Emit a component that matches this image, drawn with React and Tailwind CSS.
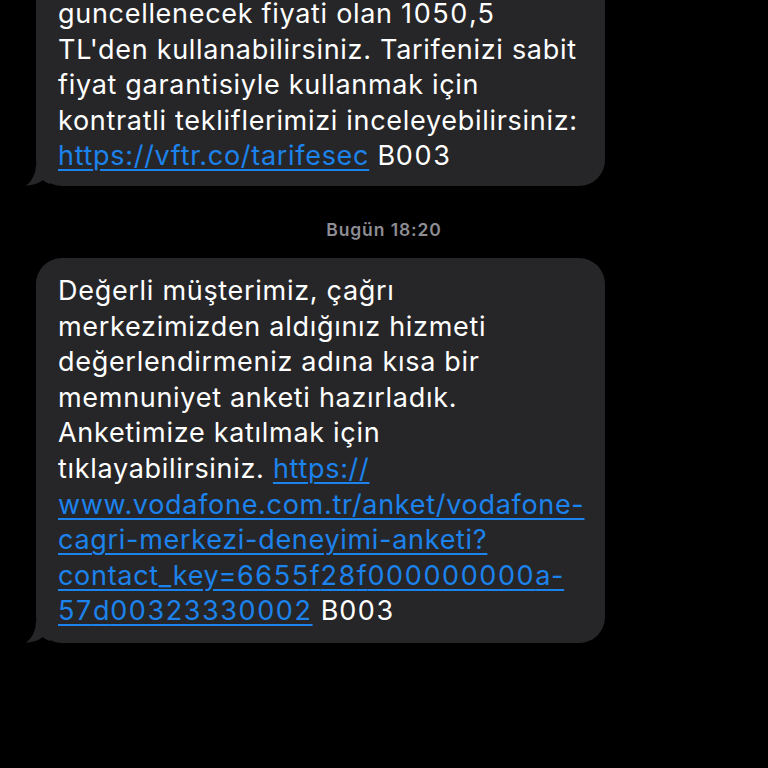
import React from "react";

const Tail = () => (
  <svg
    className="absolute left-[-10px] bottom-0"
    width="24"
    height="22"
    viewBox="0 0 24 22"
  >
    <path d="M10 0 C10 10 6 17 0 21.5 C7 21.5 13 19 17 16 C19 18 22 19.5 24 20 L24 0 Z" fill="#262628" />
  </svg>
);

const L = ({ children }) => (
  <span className="text-[#1c82ec] underline decoration-[1.5px] underline-offset-[4px]">{children}</span>
);

const D = ({ children }) => <span className="tracking-[1.6px]">{children}</span>;

const Line = ({ children }) => <div className="whitespace-nowrap">{children}</div>;

export default function App() {
  return (
    <div
      className="w-[768px] h-[768px] bg-black overflow-hidden text-white"
      style={{ fontFamily: "Inter, 'Noto Sans', sans-serif" }}
    >
      <div className="pl-[36px] w-[605px]">
        <div className="relative bg-[#262628] rounded-b-[26px] pl-[22px] pr-[20px] pb-[12px]">
          <div className="-mt-[4px] text-[27px] leading-[35.6px] tracking-[0.7px]">
            <Line>guncellenecek fiyati olan <D>1050</D>,<D>5</D></Line>
            <Line>TL'den kullanabilirsiniz. Tarifenizi sabit</Line>
            <Line>fiyat garantisiyle kullanmak için</Line>
            <Line>kontratli tekliflerimizi inceleyebilirsiniz:</Line>
            <Line>
              <L>https://vftr.co/tarifesec</L> B<D>003</D>
            </Line>
          </div>
          <Tail />
        </div>
      </div>

      <div className="h-[72px] pt-[33px] flex justify-center">
        <span className="text-[17.5px] leading-[22px] font-semibold tracking-[0.9px] text-[#8d8d93]">Bugün 18:20</span>
      </div>

      <div className="pl-[36px] w-[605px]">
        <div className="relative bg-[#262628] rounded-[26px] pl-[22px] pr-[20px] pt-[15px] pb-[14px]">
          <div className="text-[27px] leading-[35.6px] tracking-[0.7px]">
            <Line>Değerli müşterimiz, çağrı</Line>
            <Line>merkezimizden aldığınız hizmeti</Line>
            <Line>değerlendirmeniz adına kısa bir</Line>
            <Line>memnuniyet anketi hazırladık.</Line>
            <Line>Anketimize katılmak için</Line>
            <Line>
              tıklayabilirsiniz. <L>https://</L>
            </Line>
            <Line>
              <L>www.vodafone.com.tr/anket/vodafone-</L>
            </Line>
            <Line>
              <L>cagri-merkezi-deneyimi-anketi?</L>
            </Line>
            <Line>
              <L>contact_key=<D>6655</D>f<D>28</D>f<D>000000000</D>a-</L>
            </Line>
            <Line>
              <L><D>57</D>d<D>00323330002</D></L> B<D>003</D>
            </Line>
          </div>
          <Tail />
        </div>
      </div>
    </div>
  );
}
